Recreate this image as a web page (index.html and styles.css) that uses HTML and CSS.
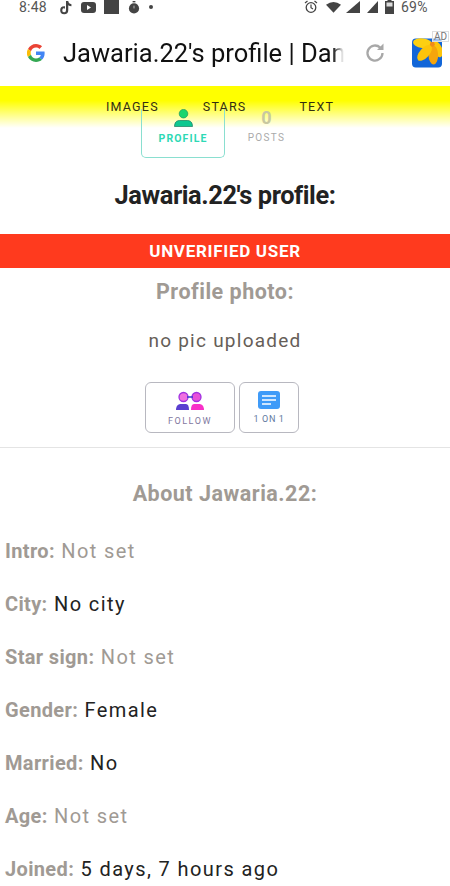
FILE: index.html
```
<!DOCTYPE html>
<html lang="en">
<head>
<meta charset="utf-8">
<title>Jawaria.22's profile</title>
<link rel="stylesheet" href="styles.css">
</head>
<body>
<div class="status">
  <span class="time">8:48</span>
  <svg class="si tiktok" viewBox="0 0 14 16"><path d="M7 1h2.400c.2 2 1.400 3.200 3.400 3.400v2.300c-1.300 0-2.400-.4-3.400-1.100v5.400a4.300 4.300 0 1 1-4.300-4.300l.8.100v2.400a2 2 0 1 0 1.100 1.800z" fill="#444"/></svg>
  <svg class="si yt" viewBox="0 0 15 11"><rect width="15" height="11" rx="3" fill="#444"/><path d="M6 3l4 2.500L6 8z" fill="#fff"/></svg>
  <span class="square"></span>
  <svg class="si watch" viewBox="0 0 12 14"><circle cx="6" cy="8" r="5.500" fill="#444"/><rect x="4.500" y="0" width="3" height="1.500" fill="#444"/><rect x="5.500" y="5" width="1" height="3" fill="#bbb"/></svg>
  <span class="dot"></span>
  <span class="spacer"></span>
  <svg class="si alarm" viewBox="0 0 14 14"><circle cx="7" cy="7.500" r="4.800" fill="none" stroke="#444" stroke-width="1.300"/><path d="M7 4.500v3.200l2 1.200M1 3l2.500-2M13 3l-2.500-2" fill="none" stroke="#444" stroke-width="1.200"/></svg>
  <svg class="si wifi" viewBox="0 0 16 12"><path d="M0 3.500Q8-2 16 3.500L8 12z" fill="#444"/></svg>
  <svg class="si signal sig-a" viewBox="0 0 12 12" preserveAspectRatio="none"><path d="M12 0v12H0z" fill="#444"/></svg>
  <svg class="si signal sig-b" viewBox="0 0 12 12" preserveAspectRatio="none"><path d="M12 0v12H0z" fill="#444"/></svg>
  <svg class="si batt" viewBox="0 0 9 14"><path d="M2.500 0h4v1H9v13H0V1h2.500z" fill="#444"/><rect x="1.500" y="2.500" width="6" height="4" fill="#ddd"/></svg>
  <span class="pct">69%</span>
</div>

<div class="urlbar">
  <svg class="glogo" viewBox="0 0 48 48"><path fill="#EA4335" d="M24 9.500c3.500 0 6.700 1.200 9.200 3.600l6.900-6.900C35.900 2.400 30.500 0 24 0 14.600 0 6.500 5.400 2.600 13.200l8 6.200C12.400 13.700 17.700 9.500 24 9.500z"/><path fill="#4285F4" d="M47 24.500c0-1.600-.1-3.100-.4-4.500H24v9h12.900c-.6 3-2.200 5.500-4.800 7.200l7.700 6c4.500-4.200 7.200-10.300 7.200-17.700z"/><path fill="#FBBC05" d="M10.500 28.600a14.500 14.500 0 0 1 0-9.200l-8-6.200a24 24 0 0 0 0 21.600z"/><path fill="#34A853" d="M24 48c6.500 0 11.900-2.100 15.900-5.800l-7.700-6c-2.200 1.500-4.900 2.300-8.200 2.300-6.300 0-11.600-4.200-13.500-9.900l-8 6.200C6.500 42.600 14.600 48 24 48z"/></svg>
  <div class="urltext">Jawaria.22's profile | Dan</div>
  <svg class="reload" viewBox="0 0 24 24"><path d="M19.500 12a7.500 7.500 0 1 1-2.300-5.400" fill="none" stroke="#a8a8a8" stroke-width="2.300"/><path d="M20.500 2.500v6.500H14z" fill="#a8a8a8"/></svg>
  <div class="adwrap">
    <svg class="adicon" viewBox="0 0 31 33"><rect y="3" width="31" height="30" rx="4" fill="#1266d8"/><ellipse cx="11" cy="8" rx="10" ry="5" transform="rotate(8 11 8)" fill="#fcd012"/><ellipse cx="26" cy="14" rx="5" ry="9" transform="rotate(-25 26 14)" fill="#fcc40a"/><ellipse cx="22" cy="20" rx="5" ry="10" transform="rotate(-2 22 20)" fill="#f5a50c"/><ellipse cx="13" cy="18" rx="5" ry="10" transform="rotate(42 13 18)" fill="#fcc40a"/><circle cx="21" cy="9" r="2.500" fill="#f08a18"/></svg>
    <span class="adtag">AD</span>
  </div>
</div>

<div class="page">
  <div class="yellow">
    <span class="yl images">IMAGES</span><span class="yl stars">STARS</span><span class="yl">TEXT</span>
  </div>
  <div class="tabs">
    <div class="tab active">
      <svg class="tabicon" viewBox="0 0 19 18"><circle cx="9.500" cy="4.700" r="4.300" fill="#1bd56e" stroke="#0a8a5a" stroke-width=".6"/><path d="M.5 17.500c0-4 2-6 5-6h8c3 0 5 2 5 6z" fill="#0fc890" stroke="#0a6a50" stroke-width=".6"/></svg>
      <span class="tablabel">PROFILE</span>
    </div>
    <div class="tab plain">
      <span class="count">0</span>
      <span class="postlabel">POSTS</span>
    </div>
  </div>

  <h1 class="title">Jawaria.22's profile:</h1>
  <div class="banner">UNVERIFIED USER</div>
  <h2 class="photo">Profile photo:</h2>
  <p class="nopic">no pic uploaded</p>

  <div class="actions">
    <div class="action follow">
      <svg class="followicon" viewBox="0 0 30 20"><circle cx="8.500" cy="6" r="4.500" fill="#f070e0" stroke="#a030e0" stroke-width="1.300"/><circle cx="21.500" cy="6" r="4.500" fill="#e850d8" stroke="#a030e0" stroke-width="1.300"/><path d="M12 6h6" stroke="#3a3ad0" stroke-width="1.500"/><path d="M1 19c0-4 2-6 5-6h5c2 0 3 2 3 6z" fill="#5a3fd0"/><path d="M16 19c0-4 1-6 3-6h5c3 0 5 2 5 6z" fill="#f830c8"/></svg>
      <span class="actlabel">FOLLOW</span>
    </div>
    <div class="action chat">
      <svg class="chaticon" viewBox="0 0 22 18"><rect width="22" height="18" rx="3" fill="#3f9bf8"/><path d="M4 5h14M4 9h14M4 13h9" stroke="#fff" stroke-width="1.300"/></svg>
      <span class="actlabel chatlabel">1 ON 1</span>
    </div>
  </div>

  <hr class="rule">
  <h2 class="about">About Jawaria.22:</h2>

  <div class="facts">
    <p class="fact"><b>Intro:</b> <span class="muted">Not set</span></p>
    <p class="fact"><b>City:</b> No city</p>
    <p class="fact"><b>Star sign:</b> <span class="muted">Not set</span></p>
    <p class="fact"><b>Gender:</b> Female</p>
    <p class="fact"><b>Married:</b> No</p>
    <p class="fact"><b>Age:</b> <span class="muted">Not set</span></p>
    <p class="fact"><b>Joined:</b> 5 days, 7 hours ago</p>
  </div>
</div>
</body>
</html>
```

FILE: styles.css
```
* { box-sizing: border-box; }
html, body { margin: 0; padding: 0; }
body {
  width: 450px;
  height: 886px;
  overflow: hidden;
  background: #fff;
  font-family: Roboto, "Liberation Sans", sans-serif;
  color: #222;
}
.status {
  height: 14px;
  display: flex;
  align-items: center;
  padding: 0 19px;
  color: #555;
  font-size: 14px;
  letter-spacing: .2px;
}
.time { width: 40px; }
.si { display: block; flex: none; }
.tiktok { width: 14px; height: 15px; margin-right: 8px; }
.yt { width: 15px; height: 11px; margin-right: 8px; }
.square { width: 15px; height: 14px; background: #444; margin-right: 9px; }
.watch { width: 12px; height: 13px; margin-right: 9px; }
.dot { width: 4px; height: 4px; border-radius: 50%; background: #444; }
.spacer { flex: 1; }
.alarm { width: 14px; height: 14px; margin-right: 8px; }
.wifi { width: 15px; height: 12px; margin-right: 5px; }
.signal { height: 12px; }
.sig-a { width: 14px; margin-right: 7px; }
.sig-b { width: 11px; margin-right: 7px; }
.batt { width: 9px; height: 14px; margin-right: 7px; }
.pct { width: 30px; }
.urlbar {
  height: 72px;
  display: flex;
  align-items: center;
  padding: 6px 0 0 27px;
}
.glogo { width: 18px; height: 18px; flex: none; margin-right: 18px; }
.urltext {
  width: 281px;
  flex: none;
  overflow: hidden;
  white-space: nowrap;
  font-size: 25.500px;
  color: #111;
  -webkit-mask-image: linear-gradient(90deg, #000 96%, transparent 100%);
  mask-image: linear-gradient(90deg, #000 96%, transparent 100%);
}
.reload { width: 24px; height: 24px; margin-left: 19px; flex: none; }
.adwrap { position: relative; width: 37px; height: 40px; margin-left: 25px; flex: none; }
.adicon { position: absolute; left: 0; top: 2px; width: 30px; height: 33px; }
.adtag {
  position: absolute;
  left: 20px;
  top: -2px;
  font-size: 10px;
  color: #777;
  background: rgba(255,255,255,.6);
  border: 1px solid #ddd;
  padding: 0 1px;
  line-height: 9px;
}
.page { position: relative; }
.yellow {
  height: 42px;
  background: linear-gradient(#ffff00 0, #ffff00 35%, #ffffa0 75%, #fff 100%);
  display: flex;
  padding: 14px 0 0 106px;
  font-size: 12.500px;
  letter-spacing: 1.200px;
  color: #332e10;
  line-height: 14px;
}
.images { margin-right: 44px; }
.stars { margin-right: 53px; }
.tabs {
  display: flex;
  margin-left: 141px;
  margin-top: -19px;
  height: 49px;
}
.tab { display: flex; flex-direction: column; align-items: center; }
.active {
  width: 84px;
  height: 49px;
  border: 1px solid #8adfd0;
  border-top: none;
  border-radius: 0 0 5px 5px;
}
.tabicon { width: 19px; height: 18px; }
.tablabel {
  font-size: 10.500px;
  line-height: 12px;
  font-weight: 700;
  letter-spacing: 1.100px;
  color: #2ed9b5;
  margin-top: 6px;
}
.plain { width: 83px; }
.count { font-size: 18px; font-weight: 700; line-height: 18px; color: #c8c8a0; }
.postlabel { font-size: 10px; line-height: 12px; letter-spacing: 1.300px; color: #aaa; margin-top: 5px; }
.title {
  margin: 23px 0 0;
  height: 53px;
  text-align: center;
  font-size: 25.400px;
  font-weight: 700;
  letter-spacing: -.4px;
  line-height: 28px;
  color: #222;
}
.banner {
  height: 34px;
  background: #ff3a1e;
  color: #fff;
  font-size: 17px;
  font-weight: 700;
  letter-spacing: .7px;
  text-align: center;
  line-height: 34px;
}
.photo {
  margin: 12px 0 0;
  text-align: center;
  font-size: 21.500px;
  font-weight: 700;
  letter-spacing: .5px;
  line-height: 24px;
  color: #a09a94;
}
.nopic {
  margin: 26px 0 0;
  text-align: center;
  font-size: 19px;
  letter-spacing: 1.250px;
  line-height: 22px;
  color: #665e58;
}
.actions { display: flex; margin: 30px 0 0 145px; gap: 4px; }
.action {
  height: 51px;
  border: 1px solid #b8b8c0;
  border-radius: 6px;
  display: flex;
  flex-direction: column;
  align-items: center;
}
.follow { width: 90px; padding-top: 8px; }
.chat { width: 60px; padding-top: 8px; }
.followicon { width: 30px; height: 20px; }
.chaticon { width: 22px; height: 18px; }
.actlabel { font-size: 9px; letter-spacing: 1.500px; color: #7f78a0; margin-top: 5px; line-height: 11px; }
.chatlabel { color: #5f7a9f; letter-spacing: .6px; }
.rule { border: none; border-top: 1px solid #e4e4e4; margin: 14px 0 0; }
.about {
  margin: 34px 0 0;
  text-align: center;
  font-size: 21.500px;
  font-weight: 700;
  letter-spacing: .5px;
  line-height: 24px;
  color: #a09a94;
}
.facts { margin: 30px 0 0 5px; }
.fact {
  margin: 0;
  height: 53px;
  line-height: 30px;
  font-size: 20px;
  letter-spacing: 1.400px;
  color: #222;
  white-space: nowrap;
}
.fact b { color: #a09a94; letter-spacing: .35px; font-size: 20px; }
.muted { color: #a09a94; }
```
